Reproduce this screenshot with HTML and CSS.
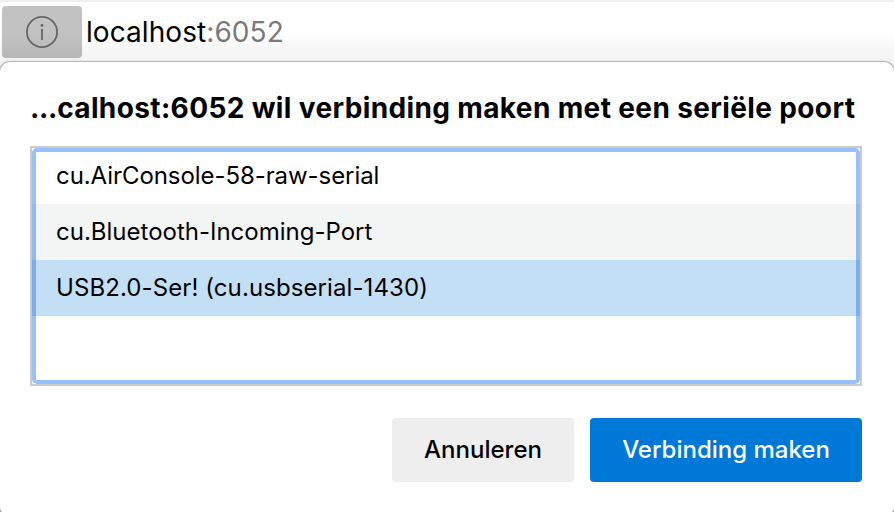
FILE: index.html
```html
<!DOCTYPE html>
<html lang="nl">
<head>
    <meta charset="UTF-8">
    <meta name="viewport" content="width=device-width, initial-scale=1.0">
    <title>localhost:6052</title>
    <link rel="stylesheet" href="styles.css">
</head>
<body>
    <div class="address-bar">
        <button class="info-btn" aria-label="Info">
            <svg width="34" height="34" viewBox="0 0 34 34" fill="none" stroke="#666" stroke-width="1.8">
                <circle cx="17" cy="17" r="15.1"/>
                <path d="M17 14v11"/>
                <circle cx="17" cy="10.4" r="1.4" fill="#666" stroke="none"/>
            </svg>
        </button>
        <div class="url"><span class="host">localhost</span><span class="port">:6052</span></div>
    </div>

    <div class="dialog">
        <h1><span class="dots">...</span>calhost:6052 wil verbinding maken met een seriële poort</h1>
        <ul class="port-list">
            <li class="airconsole">cu.AirConsole-58-raw-serial</li>
            <li class="bluetooth">cu.Bluetooth-Incoming-Port</li>
            <li class="selected">USB2.0-Ser! (cu.usbserial-1430)</li>
        </ul>
        <div class="actions">
            <button class="cancel-btn">Annuleren</button>
            <button class="connect-btn">Verbinding maken</button>
        </div>
    </div>
</body>
</html>
```

FILE: styles.css
```css
* {
    box-sizing: border-box;
}
body {
    margin: 0;
    height: 512px;
    overflow: hidden;
    display: flex;
    flex-direction: column;
    font-family: Inter, "Liberation Sans", sans-serif;
    background: linear-gradient(#f0f0f0 50%, #888 50%);
    color: #000;
}
button {
    border: none;
    padding: 0;
    font-family: inherit;
    cursor: pointer;
}
.address-bar {
    display: flex;
    align-items: flex-start;
    height: 60px;
    margin-top: 2px;
    padding: 4px 2px 0;
    gap: 4px;
    border-radius: 4px 0 0 0;
    background: linear-gradient(#fff 50%, #f2f2f2);
}
.info-btn {
    display: flex;
    align-items: center;
    justify-content: center;
    width: 80px;
    height: 52px;
    border-radius: 4px;
    background: linear-gradient(#c2c2c2 50%, #b7b7b7);
}
.url {
    line-height: 52px;
    font-size: 28px;
    letter-spacing: 0.07px;
    white-space: nowrap;
}
.port {
    color: #7a7a7a;
}
.dialog {
    flex: 1;
    margin-bottom: -4px;
    padding: 24px 32px 30px 30px;
    border-radius: 10px;
    background-color: #fff;
    box-shadow: 0 0 0 1px #b8b8b8, 0 0 3px rgba(0,0,0,0.2);
}
h1 {
    margin: 0;
    height: 60px;
    line-height: 45px;
    font-size: 28px;
    font-weight: bold;
    letter-spacing: 0.37px;
    white-space: nowrap;
}
.dots {
    letter-spacing: -0.3px;
}
.port-list {
    position: relative;
    margin: 0;
    padding: 0;
    height: 240px;
    list-style: none;
    border: 2px solid #cbcbcb;
}
/* focus ring, drawn over the rows */
.port-list::after {
    content: "";
    position: absolute;
    inset: 0;
    border: 4px solid rgba(26,115,243,0.45);
    border-radius: 5px;
}
.port-list li {
    height: 56px;
    line-height: 56px;
    padding-left: 24px;
    font-size: 24px;
}
.airconsole {
    letter-spacing: -0.07px;
}
.bluetooth {
    background-color: #f3f5f5;
}
.selected {
    background-color: #c3dff5;
    letter-spacing: 0.09px;
}
.actions {
    display: flex;
    justify-content: flex-end;
    gap: 16px;
    margin-top: 32px;
}
.actions button {
    height: 64px;
    padding-bottom: 2px;
    border-radius: 4px;
    font-size: 24px;
    font-weight: 500;
}
.cancel-btn {
    width: 182px;
    background-color: #eee;
    color: #000;
}
.connect-btn {
    width: 272px;
    background-color: #0078d7;
    color: #fff;
}
```
